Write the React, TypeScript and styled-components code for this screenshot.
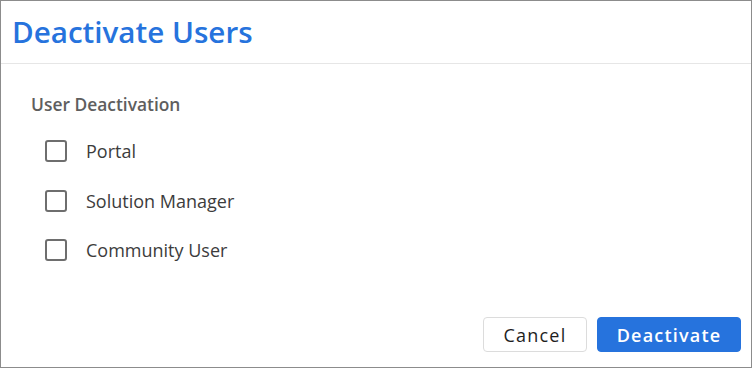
import React from 'react';
import styled, { createGlobalStyle } from 'styled-components';

const GlobalStyle = createGlobalStyle`
	html, body {
		margin: 0;
		padding: 0;
		background: #ffffff;
	}
	* {
		box-sizing: border-box;
	}
`;

const options = ['Portal', 'Solution Manager', 'Community User'];

export default function App() {
	return (
		<>
			<GlobalStyle />
			<Dialog>
				<Header>
					<Title>Deactivate Users</Title>
				</Header>
				<Body>
					<SectionLabel>User Deactivation</SectionLabel>
					<OptionList>
						{options.map((name) => (
							<OptionRow key={name}>
								<Box type="checkbox" />
								<OptionText>{name}</OptionText>
							</OptionRow>
						))}
					</OptionList>
				</Body>
				<Footer>
					<Button>Cancel</Button>
					<Button primary>Deactivate</Button>
				</Footer>
			</Dialog>
		</>
	);
}

const Dialog = styled.div`
	width: 752px;
	height: 368px;
	border: 1px solid #8c8c8c;
	background: #ffffff;
	display: flex;
	flex-direction: column;
	font-family: 'Open Sans', 'Noto Sans', sans-serif;
`;

const Header = styled.div`
	height: 63px;
	border-bottom: 1px solid #e6e6e6;
	padding: 0 11px;
	display: flex;
	align-items: center;
`;

const Title = styled.h1`
	margin: 0;
	font-size: 29.6px;
	font-weight: 600;
	color: #2673dd;
	line-height: 1;
`;

const Body = styled.div`
	flex: 1;
	padding: 28px 30px 0;
`;

const SectionLabel = styled.div`
	font-size: 17.4px;
	font-weight: 600;
	color: #5e5e5e;
	line-height: 24px;
`;

const OptionList = styled.div`
	display: flex;
	flex-direction: column;
	gap: 27.5px;
	margin-top: 24px;
	padding-left: 14px;
`;

const OptionRow = styled.label`
	display: flex;
	align-items: center;
	gap: 19px;
	height: 22px;
`;

const Box = styled.input`
	appearance: none;
	margin: 0;
	width: 22px;
	height: 22px;
	border: 2px solid #6e6e6e;
	border-radius: 3px;
	background: #ffffff;
`;

const OptionText = styled.span`
	font-size: 18px;
	color: #3c3c3c;
`;

const Footer = styled.div`
	display: flex;
	justify-content: flex-end;
	gap: 10px;
	padding: 0 10px 15px;
`;

const Button = styled.button<{ primary?: boolean }>`
	height: 35px;
	padding: 0;
	width: ${(p) => (p.primary ? 144 : 104)}px;
	border-radius: 4px;
	border: 1px solid ${(p) => (p.primary ? '#2673dd' : '#dcdcdc')};
	background: ${(p) => (p.primary ? '#2673dd' : '#ffffff')};
	color: ${(p) => (p.primary ? '#ffffff' : '#1e1e1e')};
	font-family: 'Open Sans', 'Noto Sans', sans-serif;
	font-size: 18px;
	font-weight: ${(p) => (p.primary ? 600 : 400)};
	letter-spacing: 1.2px;
`;
